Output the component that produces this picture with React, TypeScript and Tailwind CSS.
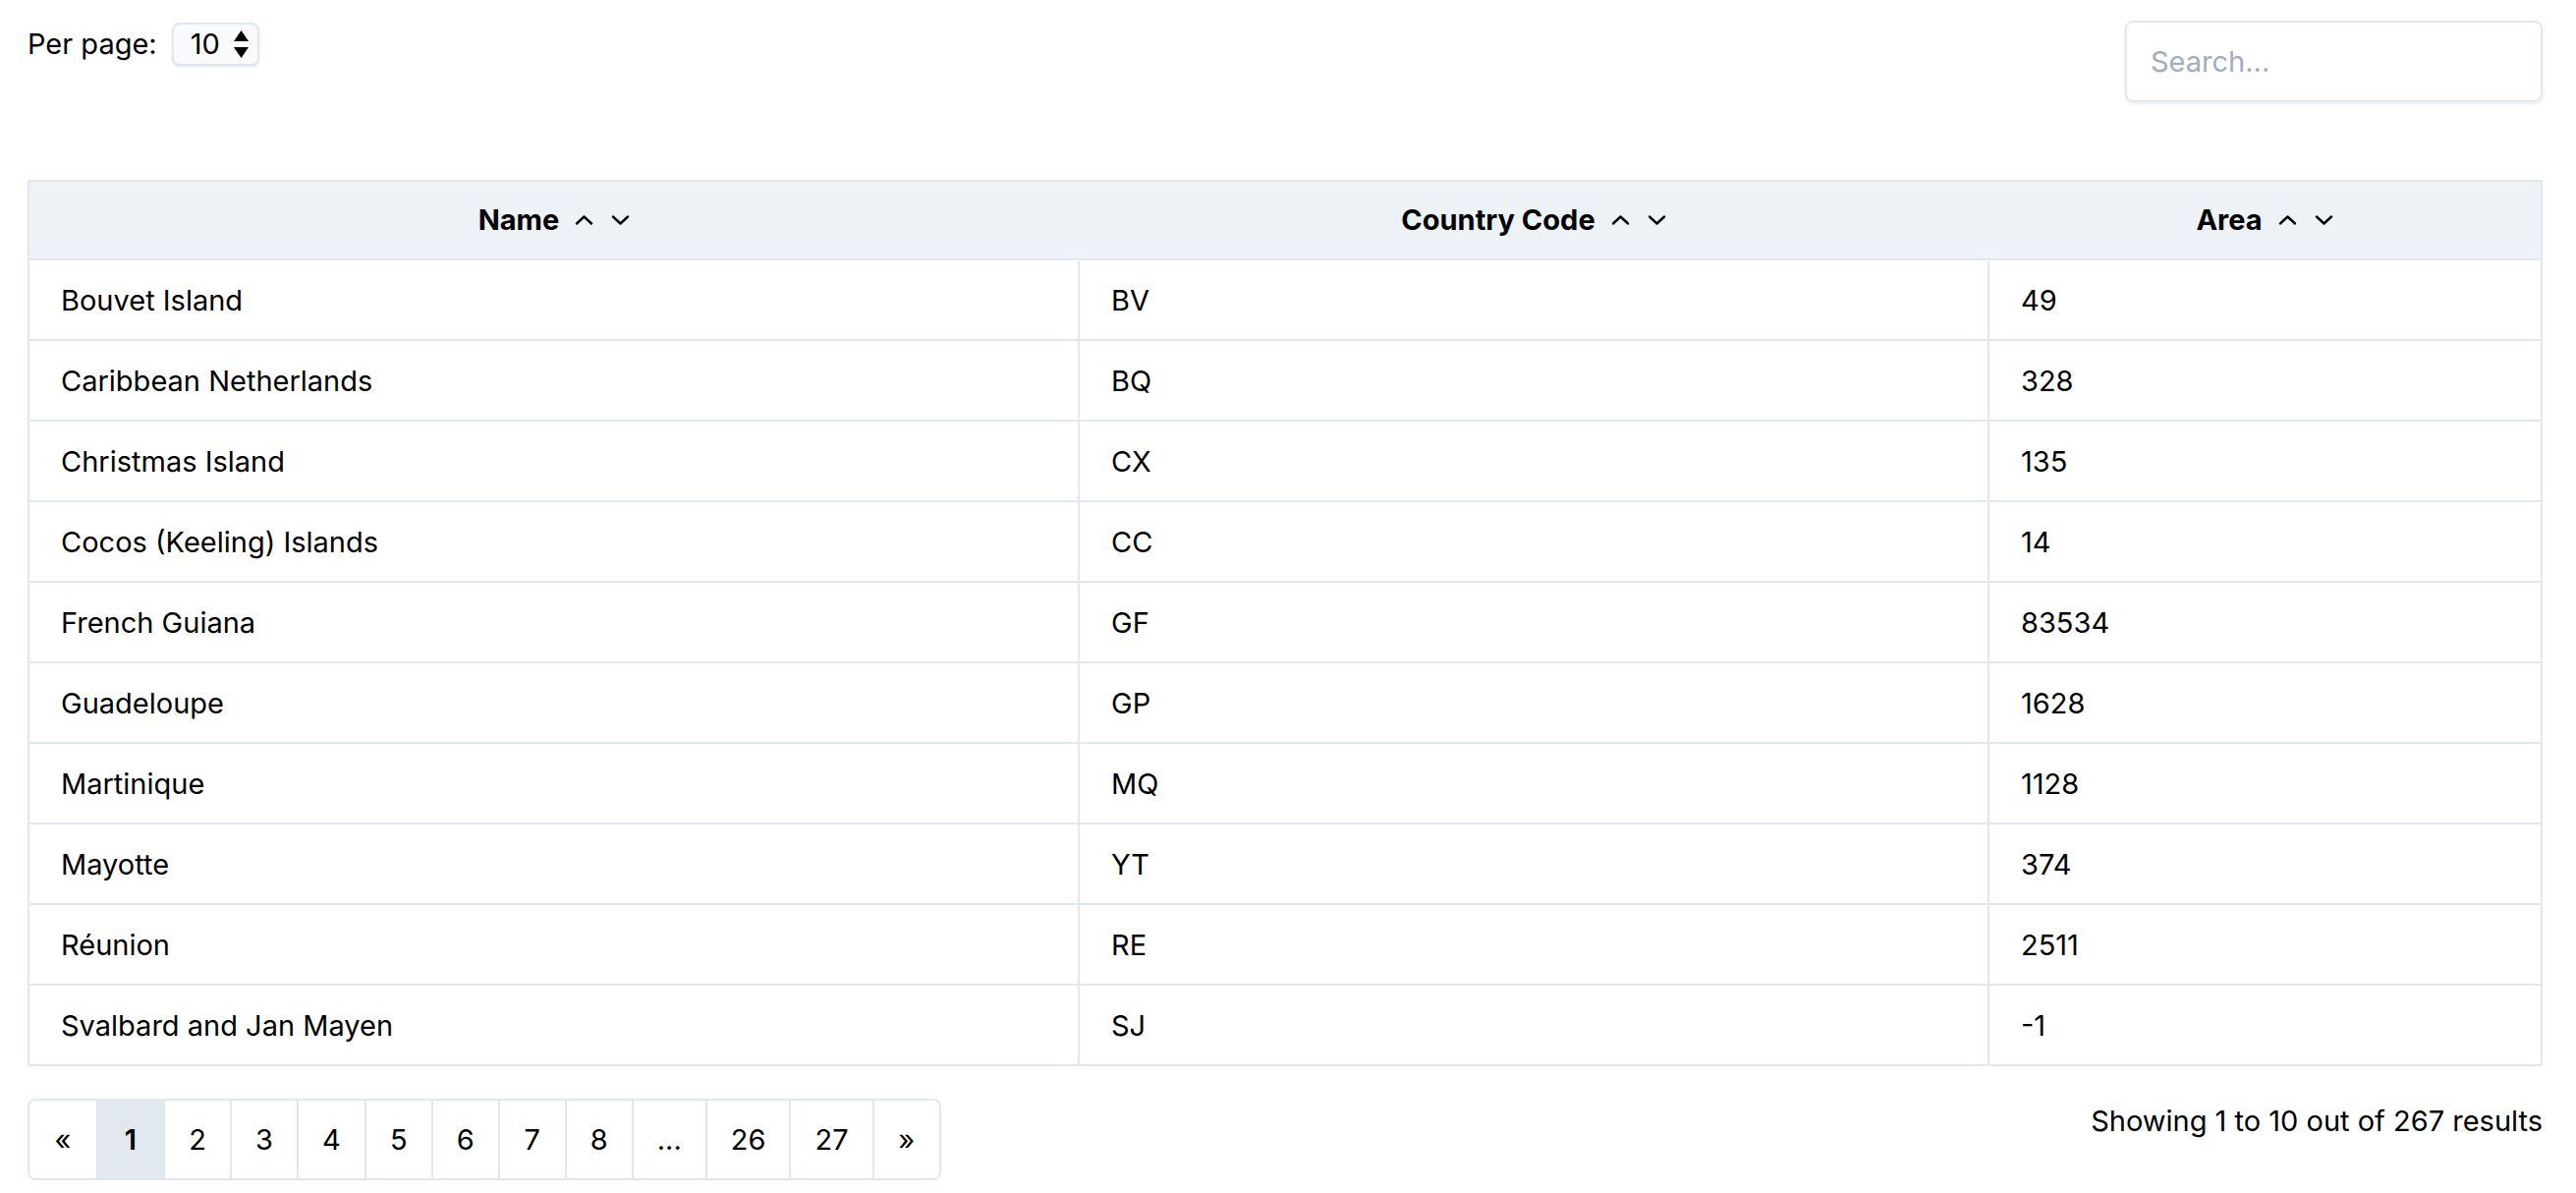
import { useState } from "react";

const rows = [
    { name: "Bouvet Island", code: "BV", area: "49" },
    { name: "Caribbean Netherlands", code: "BQ", area: "328" },
    { name: "Christmas Island", code: "CX", area: "135" },
    { name: "Cocos (Keeling) Islands", code: "CC", area: "14" },
    { name: "French Guiana", code: "GF", area: "83534" },
    { name: "Guadeloupe", code: "GP", area: "1628" },
    { name: "Martinique", code: "MQ", area: "1128" },
    { name: "Mayotte", code: "YT", area: "374" },
    { name: "Réunion", code: "RE", area: "2511" },
    { name: "Svalbard and Jan Mayen", code: "SJ", area: "-1" },
];

const pages = ["«", "1", "2", "3", "4", "5", "6", "7", "8", "...", "26", "27", "»"];

function SortArrows() {
    return (
        <span className="inline-flex items-center gap-[18px] ml-[16px]">
            <svg width="19" height="10" viewBox="0 0 19 10" fill="none" stroke="currentColor" strokeWidth="2.4" strokeLinecap="round" strokeLinejoin="round">
                <path d="M2 8.5 9.5 1.5 17 8.5" />
            </svg>
            <svg width="19" height="10" viewBox="0 0 19 10" fill="none" stroke="currentColor" strokeWidth="2.4" strokeLinecap="round" strokeLinejoin="round">
                <path d="M2 1.5 9.5 8.5 17 1.5" />
            </svg>
        </span>
    );
}

export default function App() {
    const [query, setQuery] = useState("");
    const [page] = useState("1");

    return (
        <div className="min-h-screen bg-white pl-[28px] pr-[34px] pt-[21px] font-['Inter',sans-serif] text-[29px] text-black">
            {/* Top bar */}
            <div className="flex items-start justify-between">
                <div className="flex items-center gap-[15px] mt-[2px]">
                    <span className="leading-[44px]">Per page:</span>
                    <div className="flex items-center h-[44px] w-[89px] pl-[17px] pr-[9px] justify-between rounded-[8px] border-2 border-[#e2e8f0] bg-[#f8fafc] shadow-sm">
                        <span>10</span>
                        <svg width="15" height="28" viewBox="0 0 15 28" fill="currentColor">
                            <path d="M7.5 0 15 11H0Z" />
                            <path d="M0 17H15L7.5 28Z" />
                        </svg>
                    </div>
                </div>
                <input
                    type="text"
                    placeholder="Search..."
                    value={query}
                    onChange={(e) => setQuery(e.target.value)}
                    className="w-[425px] h-[83px] px-[24px] rounded-[8px] border-2 border-[#e2e8f0] shadow-[0_2px_4px_rgba(0,0,0,0.08)] outline-none text-[29px] placeholder:text-[#a0aec0]"
                />
            </div>

            {/* Table */}
            <table className="mt-[79px] w-full table-fixed border-collapse border-2 border-[#e2e8f0]">
                <colgroup>
                    <col className="w-[1069px]" />
                    <col className="w-[926px]" />
                    <col />
                </colgroup>
                <thead>
                    <tr className="h-[80px] bg-[#edf2f7]">
                        <th className="font-bold text-center"><span className="inline-flex items-center">Name<SortArrows /></span></th>
                        <th className="font-bold text-center"><span className="inline-flex items-center">Country Code<SortArrows /></span></th>
                        <th className="font-bold text-center"><span className="inline-flex items-center">Area<SortArrows /></span></th>
                    </tr>
                </thead>
                <tbody>
                    {rows.map((r) => (
                        <tr key={r.code} className="h-[82px]">
                            <td className="border-2 border-[#e2e8f0] px-[32px] pt-[2px]">{r.name}</td>
                            <td className="border-2 border-[#e2e8f0] px-[32px] pt-[2px]">{r.code}</td>
                            <td className="border-2 border-[#e2e8f0] px-[32px] pt-[2px]">{r.area}</td>
                        </tr>
                    ))}
                </tbody>
            </table>

            {/* Footer */}
            <div className="flex items-start justify-between mt-[33px]">
                <div className="flex h-[83px] rounded-[8px] border-2 border-[#e2e8f0] overflow-hidden">
                    {pages.map((p, i) => (
                        <div
                            key={p + i}
                            className={
                                "flex items-center justify-center px-[24px] min-w-[68px] " +
                                (i > 0 ? "border-l-2 border-[#e2e8f0] " : "") +
                                (p === page ? "bg-[#e2e8f0] font-semibold" : "")
                            }
                        >
                            {p}
                        </div>
                    ))}
                </div>
                <p className="leading-[46px]">Showing 1 to 10 out of 267 results</p>
            </div>
        </div>
    );
}
